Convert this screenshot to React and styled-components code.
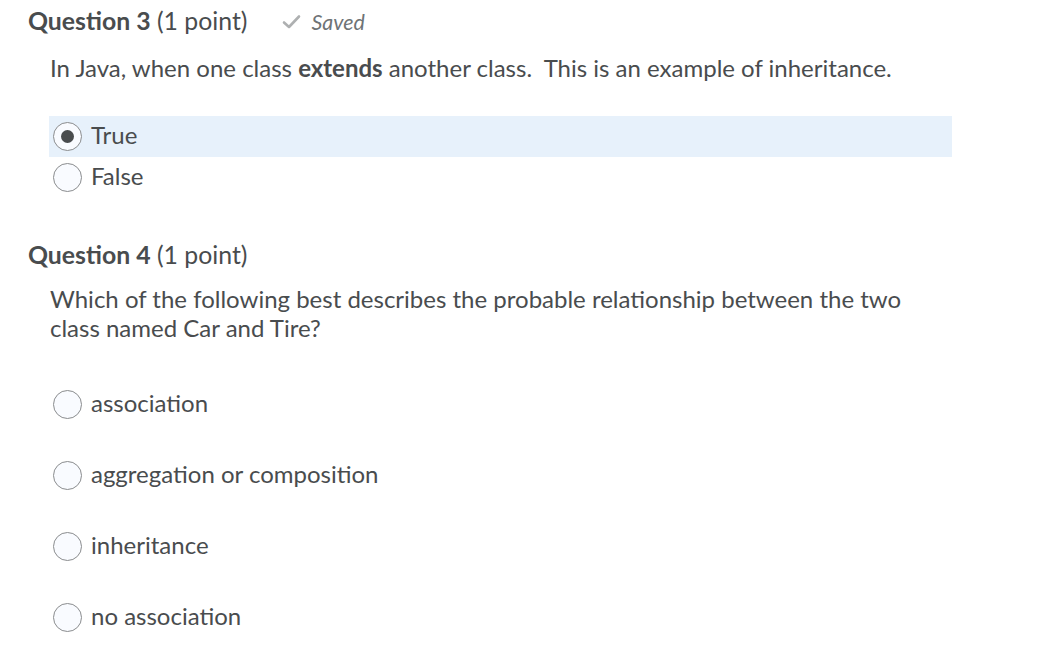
import React from "react";
import styled, { createGlobalStyle } from "styled-components";

const Global = createGlobalStyle`
  html, body { margin: 0; padding: 0; background: #fff; }
  body { font-family: Lato, "Open Sans", sans-serif; color: #494c4e; }
`;

const Page = styled.div`
  padding: 6px 0 0 28px;
  width: 924px;
`;

const Question = styled.section`
  margin-bottom: ${(p) => p.$gap || 0}px;
`;

const Header = styled.div`
  display: flex;
  align-items: center;
  gap: 35px;
  height: 32px;
`;

const Title = styled.h2`
  margin: 0;
  font-size: 24.8px;
  font-weight: 400;
  line-height: 32px;
  position: relative;
  top: -1px;
  b { font-weight: 700; }
`;

const Saved = styled.span`
  display: flex;
  align-items: center;
  gap: 10px;
  font-size: 21.4px;
  font-style: italic;
  color: #6e7376;
`;

const Body = styled.div`
  padding-left: 22px;
`;

const Prompt = styled.p`
  margin: 0;
  font-size: 24px;
  line-height: 29px;
  padding-top: ${(p) => p.$top}px;
  padding-bottom: ${(p) => p.$bottom}px;
  b { font-weight: 700; }
`;

const Options = styled.div`
  display: flex;
  flex-direction: column;
  gap: ${(p) => p.$gap}px;
`;

const Option = styled.label`
  display: flex;
  align-items: center;
  gap: 9px;
  height: 41px;
  margin-left: -1px;
  padding-left: 4px;
  width: 899px;
  background: ${(p) => (p.$selected ? "#e7f1fb" : "transparent")};
  font-size: 24px;
  cursor: pointer;
`;

const OptionText = styled.span`
  margin-bottom: 5px;
`;

const Radio = styled.span`
  box-sizing: border-box;
  width: 29px;
  height: 29px;
  border-radius: 50%;
  border: 1px solid #8a8c8e;
  background: #f9fbff;
  display: flex;
  align-items: center;
  justify-content: center;
  flex-shrink: 0;
  &::after {
    content: "";
    width: 13px;
    height: 13px;
    border-radius: 50%;
    background: #494c4e;
    display: ${(p) => (p.$checked ? "block" : "none")};
  }
`;

const Check = () => (
  <svg width="19" height="16" viewBox="0 0 19 16">
    <path d="M2 8.5 L7 13 L17 2.5" fill="none" stroke="#aeb0b1" strokeWidth="2.6" strokeLinecap="round" strokeLinejoin="round" />
  </svg>
);

const Choice = ({ selected, children }) => (
  <Option $selected={selected}>
    <Radio $checked={selected} />
    <OptionText>{children}</OptionText>
  </Option>
);

export default function App() {
  return (
    <Page>
      <Global />
      <Question $gap={42}>
        <Header>
          <Title><b>Question 3</b> (1 point)</Title>
          <Saved><Check />Saved</Saved>
        </Header>
        <Body>
          <Prompt $top={15} $bottom={34}>
            In Java, when one class <b>extends</b> another class.&nbsp; This is an example of inheritance.
          </Prompt>
          <Options $gap={0}>
            <Choice selected>True</Choice>
            <Choice>False</Choice>
          </Options>
        </Body>
      </Question>
      <Question>
        <Header>
          <Title><b>Question 4</b> (1 point)</Title>
        </Header>
        <Body>
          <Prompt $top={12} $bottom={42}>
            Which of the following best describes the probable relationship between the two class named Car and Tire?
          </Prompt>
          <Options $gap={30}>
            <Choice>association</Choice>
            <Choice>aggregation or composition</Choice>
            <Choice>inheritance</Choice>
            <Choice>no association</Choice>
          </Options>
        </Body>
      </Question>
    </Page>
  );
}
